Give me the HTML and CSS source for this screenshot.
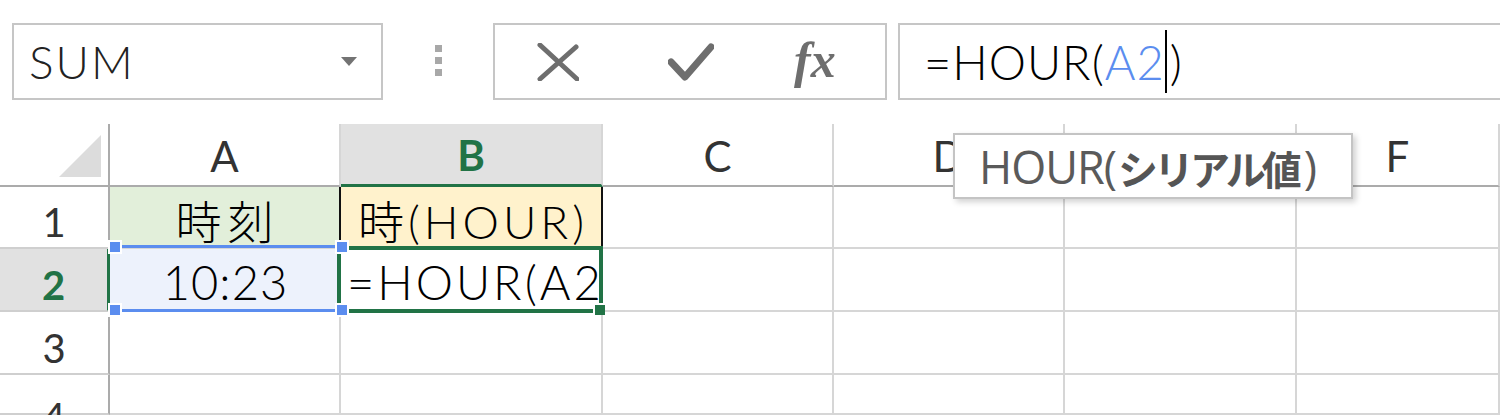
FILE: index.html
```html
<!DOCTYPE html>
<html lang="ja">
<head>
<meta charset="utf-8">
<title>HOUR</title>
<link rel="stylesheet" href="styles.css">
</head>
<body>
<div class="app">
  <div class="fbar">
    <div class="namebox"><span class="name">SUM</span><span class="caret"></span></div>
    <div class="grip"><span></span><span></span><span></span></div>
    <div class="btns">
      <svg class="ico-x" width="42" height="38" viewBox="0 0 42 38"><path d="M3 2 L40 36 M39 4 L3 36" stroke="#6e6e6e" stroke-width="5" fill="none" stroke-linecap="round"/></svg>
      <svg class="ico-check" width="46" height="42" viewBox="0 0 46 42"><path d="M3 20 L17 35 L43 5" stroke="#6e6e6e" stroke-width="7" fill="none" stroke-linecap="round" stroke-linejoin="round"/></svg>
      <span class="fx">fx</span>
    </div>
    <div class="formula"><span class="ftxt">=HOUR(<span class="ref">A2</span></span><span class="cursor"></span><span class="ftxt">)</span></div>
  </div>

  <div class="sheet">
    <div class="corner"><span class="tri"></span></div>
    <div class="ch">A</div>
    <div class="ch ch-sel">B</div>
    <div class="ch">C</div>
    <div class="ch">D</div>
    <div class="ch">E</div>
    <div class="ch">F</div>

    <div class="rh">1</div>
    <div class="cell a1">時刻</div>
    <div class="cell b1">時(HOUR)</div>
    <div class="cell"></div>
    <div class="cell"></div>
    <div class="cell"></div>
    <div class="cell"></div>

    <div class="rh rh-sel">2</div>
    <div class="cell a2">10:23<span class="refbox"><i class="h tl"></i><i class="h tr"></i><i class="h bl"></i><i class="h br"></i></span></div>
    <div class="cell b2"><span class="b2txt">=HOUR(A2)</span><span class="selbox"><i class="fill"></i></span></div>
    <div class="cell"></div>
    <div class="cell"></div>
    <div class="cell"></div>
    <div class="cell"></div>

    <div class="rh">3</div>
    <div class="cell"></div>
    <div class="cell"></div>
    <div class="cell"></div>
    <div class="cell"></div>
    <div class="cell"></div>
    <div class="cell"></div>

    <div class="rh rh4">4</div>
    <div class="cell"></div>
    <div class="cell"></div>
    <div class="cell"></div>
    <div class="cell"></div>
    <div class="cell"></div>
    <div class="cell"></div>
  </div>

  <div class="tooltip"><span class="tt-lat">HOUR(</span><b>シリアル値</b><span class="tt-lat">)</span></div>
</div>
</body>
</html>
```

FILE: styles.css
```css
* { box-sizing: border-box; }
html, body { margin: 0; padding: 0; background: #fff; }
body { width: 1500px; height: 415px; overflow: hidden; }

.app {
  position: relative;
  width: 1500px;
  height: 415px;
  overflow: hidden;
  padding-top: 23px;
  font-family: "Lato", "Noto Sans CJK JP Light", "Noto Sans CJK JP", sans-serif;
}

/* formula bar */
.fbar { display: flex; height: 77px; }

.namebox {
  margin-left: 12px;
  width: 371px;
  border: 2px solid #c6c6c6;
  display: flex;
  align-items: center;
  padding: 0 24px 0 15px;
}
.name {
  font-size: 46px;
  font-weight: 300;
  color: #222;
  letter-spacing: 2px;
}
.caret {
  margin-left: auto;
  width: 0; height: 0;
  border-left: 8px solid transparent;
  border-right: 8px solid transparent;
  border-top: 9px solid #737373;
}

.grip {
  width: 110px;
  display: flex;
  flex-direction: column;
  align-items: center;
  justify-content: center;
  gap: 5px;
  padding-bottom: 2px;
}
.grip span { width: 7px; height: 7px; background: #a8a8a8; }

.btns {
  width: 394px;
  border: 2px solid #c6c6c6;
  display: flex;
  align-items: center;
  padding-left: 42px;
}
.ico-x { display: block; }
.ico-check { display: block; margin-left: 89px; margin-top: 2px; }
.fx {
  margin-left: 80px;
  font-family: "Liberation Serif", serif;
  font-style: italic;
  font-weight: bold;
  font-size: 50px;
  color: #6e6e6e;
  line-height: 1;
  margin-top: -4px;
}

.formula {
  margin-left: 11px;
  flex: 1;
  border: 2px solid #c6c6c6;
  border-right: none;
  display: flex;
  align-items: center;
  padding-left: 24px;
}
.ftxt {
  font-size: 47px;
  font-weight: 300;
  color: #000;
  letter-spacing: 1px;
  white-space: pre;
}
.ref { color: #5b8def; }
.cursor { width: 2px; height: 63px; background: #000; margin: 0 3px 0 0; }

/* sheet */
.sheet {
  margin-top: 24px;
  display: grid;
  grid-template-columns: 110px 231px 262px 231px 231px 232px 1fr;
  grid-template-rows: 63px 62px 63px 63px 40px;
}
.sheet > div {
  border-right: 2px solid #d6d6d6;
  border-bottom: 2px solid #d6d6d6;
  display: flex;
  align-items: center;
  justify-content: center;
  position: relative;
}

.corner {
  border-right-color: #ababab !important;
  border-bottom-color: #ababab !important;
  align-items: flex-end !important;
  justify-content: flex-end !important;
  padding: 0 7px 8px 0;
}
.tri {
  width: 0; height: 0;
  border-left: 42px solid transparent;
  border-bottom: 42px solid #dcdcdc;
}

.ch {
  font-family: "Lato", sans-serif;
  font-size: 42px;
  color: #333;
  border-bottom-color: #ababab !important;
  padding-top: 2px;
}
.ch-sel {
  background: #e1e1e1;
  color: #217346;
  font-weight: bold;
  border-bottom: 3px solid #217346 !important;
}

.rh {
  font-family: "Lato", sans-serif;
  font-size: 40px;
  color: #333;
  border-right-color: #ababab !important;
  border-bottom-color: #cfcfcf !important;
  padding-top: 10px;
}
.rh-sel {
  background: #e1e1e1;
  color: #217346;
  font-weight: bold;
  border-right: 3px solid #217346 !important;
}
.rh4 { align-items: flex-start !important; padding-top: 18px; }

.cell {
  font-size: 46px;
  font-weight: 300;
  color: #000;
  white-space: nowrap;
  padding-top: 4px;
}
.a1 { background: #e2efda; border-right-color: #111 !important; letter-spacing: 6px; padding-left: 6px; }
.b1 { background: #fff2cc; border-right-color: #111 !important; letter-spacing: 4px; padding-left: 4px; }
.a2 { background: #edf2fc; letter-spacing: 1px; font-size: 47px; padding-left: 2px; }
.b2 { justify-content: flex-start !important; padding-left: 6px; }
.b2txt { display: block; width: 100%; overflow: hidden; letter-spacing: 3px; font-size: 47px; }

.refbox {
  position: absolute;
  left: 0; right: -2px; top: -4px; bottom: -2px;
  border-top: 3px solid #5b8def;
  border-bottom: 3px solid #5b8def;
  z-index: 3;
}
.h {
  position: absolute;
  width: 14px; height: 14px;
  background: #5b8def;
  border: 2px solid #fff;
}
.tl { left: -2px; top: -8px; }
.tr { right: -8px; top: -8px; }
.bl { left: -2px; bottom: -8px; }
.br { right: -8px; bottom: -8px; }

.selbox {
  position: absolute;
  left: -4px; right: -2px; top: -3px; bottom: -3px;
  border: 4px solid #217346;
  z-index: 2;
}
.fill {
  position: absolute;
  right: -6px; bottom: -6px;
  width: 12px; height: 12px;
  background: #217346;
  border-left: 2px solid #fff;
  border-top: 2px solid #fff;
}

/* tooltip */
.tooltip {
  position: absolute;
  left: 953px;
  top: 133px;
  width: 400px;
  height: 66px;
  background: #fff;
  border: 2px solid #c4c4c4;
  box-shadow: 3px 3px 6px rgba(0,0,0,0.18);
  display: flex;
  align-items: center;
  padding-left: 24px;
  font-family: "Open Sans", "Noto Sans CJK JP", sans-serif;
  color: #5a5a5a;
  z-index: 5;
}
.tt-lat { font-size: 45px; letter-spacing: -1px; }
.tooltip b {
  font-family: "Noto Sans CJK JP", sans-serif;
  font-size: 40px;
  font-weight: bold;
  color: #555;
  letter-spacing: -4px;
  margin: 4px 6px 0 2px;
}
```
